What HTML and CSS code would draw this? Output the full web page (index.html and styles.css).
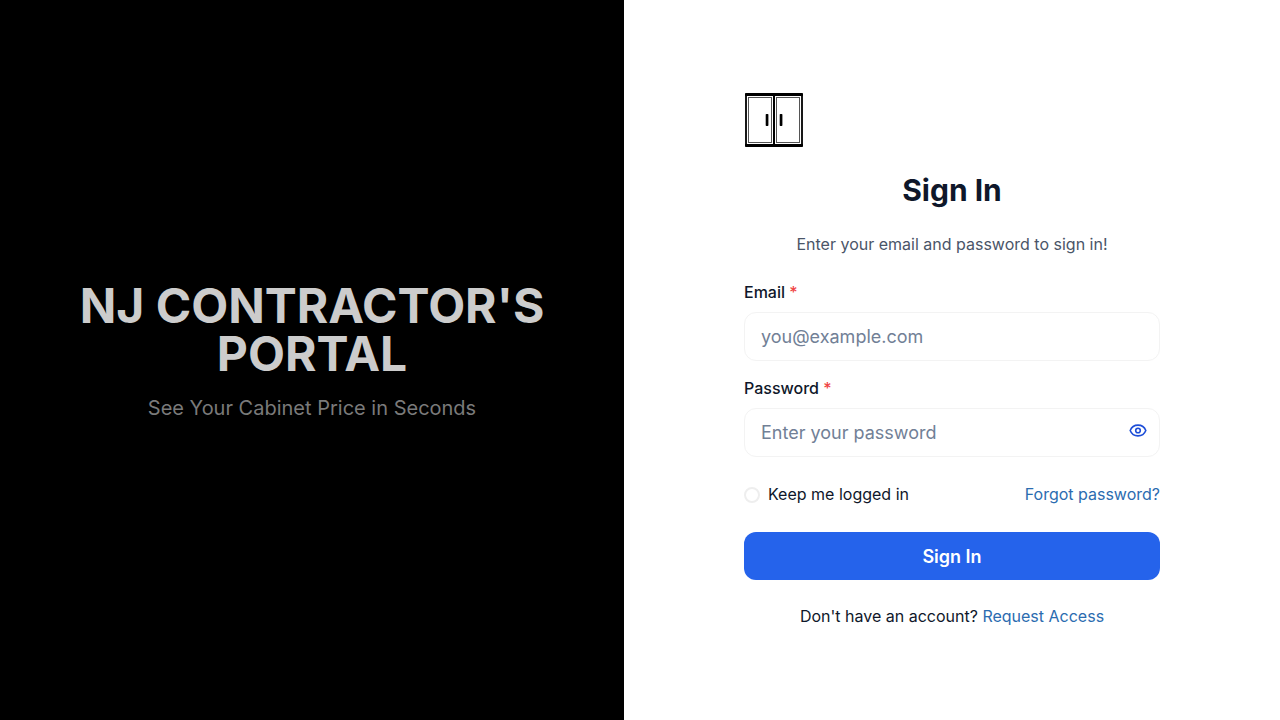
FILE: index.html
```html
<!DOCTYPE html>
<html lang="en">
<head>
<meta charset="utf-8">
<title>Sign In</title>
<link rel="stylesheet" href="styles.css">
</head>
<body>
<main class="page">
  <section class="hero">
    <h1 class="hero-title">NJ CONTRACTOR'S PORTAL</h1>
    <p class="hero-sub">See Your Cabinet Price in Seconds</p>
  </section>
  <section class="panel">
    <form class="form">
      <svg class="logo" width="60" height="56" viewBox="0 0 60 56" fill="none" stroke="#000">
        <path d="M2 2V54M58 2V54" stroke-width="1.800"/>
        <rect x="1" y="1" width="58" height="3" rx=".8" fill="#000" stroke="none"/>
        <rect x="1" y="52" width="58" height="3" rx=".8" fill="#000" stroke="none"/>
        <path d="M30 3V53" stroke-width="2"/>
        <rect x="4.500" y="5.500" width="23" height="45" stroke-width="1" stroke="#555"/>
        <rect x="32.500" y="5.500" width="23" height="45" stroke-width="1" stroke="#555"/>
        <rect x="21.700" y="22" width="2.700" height="12" rx=".7" fill="#000" stroke="none"/>
        <rect x="35.700" y="22" width="2.700" height="12" rx=".7" fill="#000" stroke="none"/>
      </svg>
      <h2 class="title">Sign In</h2>
      <p class="lead">Enter your email and password to sign in!</p>
      <label class="label" for="email">Email <span class="req">*</span></label>
      <input class="input" id="email" type="email" placeholder="you@example.com">
      <label class="label" for="password">Password <span class="req">*</span></label>
      <div class="field">
        <input class="input" id="password" type="password" placeholder="Enter your password">
        <svg class="eye" width="20" height="21" viewBox="0 -0.5 20 21" fill="none" stroke="#1d4ed8" stroke-width="1.600">
          <path d="M2.200 10C3.500 6.600 6.400 4.600 10 4.600S16.500 6.600 17.800 10C16.500 13.400 13.600 15.400 10 15.400S3.500 13.400 2.200 10Z"/>
          <circle cx="10" cy="10" r="2.300"/>
        </svg>
      </div>
      <div class="options">
        <label class="keep"><span class="radio"></span>Keep me logged in</label>
        <a class="link">Forgot password?</a>
      </div>
      <button class="submit" type="button">Sign In</button>
      <p class="signup">Don't have an account? <a class="link">Request Access</a></p>
    </form>
  </section>
</main>
</body>
</html>
```
FILE: styles.css
```css
* { box-sizing: border-box; }
body { margin: 0; font-family: Inter, sans-serif; font-size: 16px; line-height: 24px; color: #0f172a; background: #fff; }
h1, h2, p { margin: 0; }
.page { display: flex; height: 720px; }
.hero { width: 624px; background: #000; display: flex; flex-direction: column; align-items: center; justify-content: center; padding: 0 64px 16px; text-align: center; }
.hero-title { font-size: 48px; line-height: 48px; font-weight: 700; color: #ccc; }
.hero-sub { margin-top: 16px; font-size: 20px; line-height: 28px; color: #7a7a7a; }
.panel { flex: 1; padding: 92px 120px 0; }
.form { display: flex; flex-direction: column; width: 416px; }
.logo { display: block; }
.title { margin-top: 24px; font-size: 30px; line-height: 36px; font-weight: 700; text-align: center; }
.lead { margin-top: 24px; text-align: center; color: #4a5568; }
.label { margin-top: 24px; font-weight: 500; }
.req { color: #ef4444; }
.input { display: block; width: 100%; height: 49px; margin: 8px 0 0; padding: 0 16px; border: 1px solid #f3f3f3; border-radius: 12px; background: #fff; font-family: inherit; font-size: 18px; outline: none; }
.input::placeholder { color: #718096; opacity: 1; }
.input + .label { margin-top: 15px; }
.field { position: relative; }
.eye { position: absolute; right: 12px; top: 20px; }
.options { display: flex; justify-content: space-between; margin-top: 25px; }
.keep { display: flex; align-items: center; gap: 8px; }
.radio { width: 16px; height: 16px; margin-top: 1px; border: 2px solid #eee; border-radius: 50%; }
.link { color: #2b6cb0; }
.submit { height: 48px; margin-top: 26px; border: 0; border-radius: 12px; background: #2563eb; color: #fff; font-family: inherit; font-size: 18px; font-weight: 600; }
.signup { margin-top: 24px; text-align: center; }
```
